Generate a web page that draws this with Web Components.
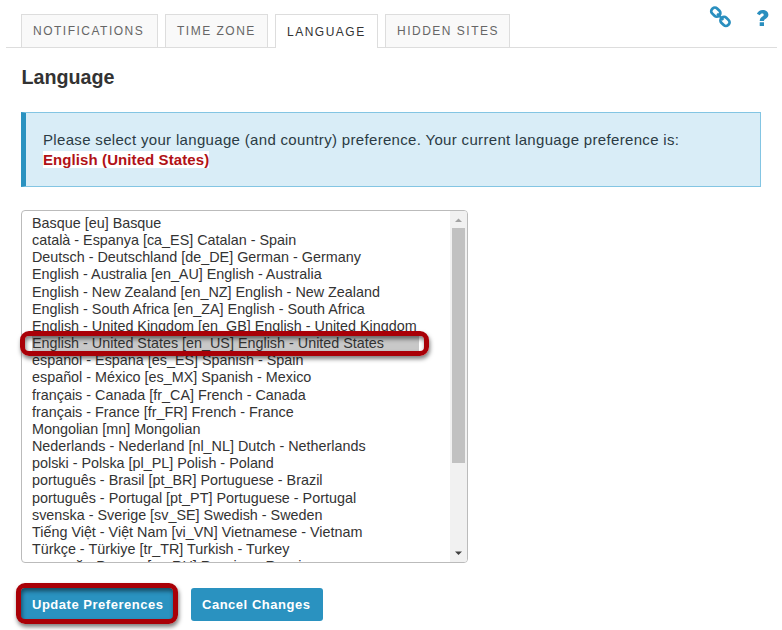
<!DOCTYPE html>
<html lang="en">
<head>
<meta charset="utf-8">
<title>Preferences - Language</title>
<style>
html,body{margin:0;background:#fff;width:782px;height:630px;overflow:hidden}
body{font-family:"Liberation Sans",Arial,sans-serif;color:#333}
</style>
</head>
<body>
<prefs-page></prefs-page>
<script>
const define = (name, html, setup) => customElements.define(name, class extends HTMLElement {
  connectedCallback() {
    if (this.shadowRoot) return;
    const root = this.attachShadow({mode: 'open'});
    root.innerHTML = html;
    if (setup) setup(root, this);
  }
});

define('prefs-tab', `<style>
:host{display:block;box-sizing:border-box;height:33px;border:1px solid #ddd;border-bottom:0;background:#f9f9f9;
 padding:0 0 0 11px;font-size:12px;line-height:32px;letter-spacing:1.5px;color:#666;white-space:nowrap}
:host([active]){height:34px;background:#fff;color:#333;line-height:34px;margin-bottom:-1px}
</style><slot></slot>`);

define('prefs-tabs', `<style>
:host{display:flex;box-sizing:border-box;height:48px;margin-left:6px;width:771px;padding:14px 0 0 15px;gap:7px;border-bottom:1px solid #ddd}
.icons{position:absolute;left:709px;top:6px;display:flex;gap:0}
svg{display:block}
</style><slot></slot>
<div class="icons">
<svg width="23" height="23" viewBox="0 0 23 23" fill="none" stroke="#2a8fbf" stroke-width="2.7">
<rect x="2" y="2.6" width="9.6" height="7" rx="3.1" transform="rotate(45 6.8 6.1)"/>
<rect x="11.2" y="11.9" width="9.6" height="7" rx="3.1" transform="rotate(45 16 15.4)"/>
<path stroke-width="2.4" d="M8.2 7.6l6.2 6.2"/></svg>
<svg width="40" height="23" viewBox="0 0 40 23"><path fill="#2a8fbf" d="M24.9 7.8C26 5.4 27.9 4 30.7 4c3.2 0 5.7 1.9 5.7 4.7 0 3.7-4.4 3.9-4.4 6.3h-4.3c0-4.3 4-4.3 4-6.1 0-.8-.6-1.3-1.5-1.3-1 0-1.7.6-2.4 1.7zM27.7 16.2H32V20h-4.3z"/></svg>
</div>`);

define('info-banner', `<style>
:host{display:block;box-sizing:border-box;width:740px;height:75px;border:1px solid #83c5e3;border-left:5px solid #2a92c0;background:#d9edf7;
 padding:17px 0 0 17px;font-size:15px;line-height:20px;letter-spacing:.325px;color:#2b3b44;white-space:nowrap}
</style><slot></slot>`);

define('current-value', `<style>
:host{display:table;background:#fff;color:#b11116;font-weight:bold;font-size:15px;line-height:17px;letter-spacing:.09px;margin-top:1px}
</style><slot></slot>`);

define('mark-frame', `<style>
:host{position:absolute;box-sizing:border-box;border:5px solid #a90007;border-radius:9px;
 box-shadow:1px 3px 4px rgba(0,0,0,.5),inset 1px 3px 4px rgba(0,0,0,.5)}
</style>`);

define('list-option', `<style>
:host{display:block;padding-left:10px;margin-right:31px;height:17.16px;line-height:17.16px;white-space:nowrap}
:host([selected]) {margin-left:10px;padding-left:0;background:#c8c8c8}
</style><slot></slot>`);

define('list-scrollbar', `<style>
:host{display:flex;flex-direction:column;align-items:center;width:17px;background:#f1f1f1}
i{width:13px;height:235px;background:#c1c1c1}
.g{flex:1}
svg{width:17px;height:17px}
</style><svg viewBox="0 0 17 17"><path fill="#a3a3a3" d="M5 11h7L8.5 7.5z"/></svg><i></i><div class="g"></div><svg viewBox="0 0 17 17"><path fill="#404040" d="M5 6.5h7L8.5 10z"/></svg>`);

define('language-list', `<style>
:host{display:flex;box-sizing:border-box;width:447px;height:353px;border:1px solid #bbb;border-radius:4px;overflow:hidden;font-size:14.37px;color:#333}
.rows{flex:1;padding-top:4px;overflow:hidden;box-sizing:border-box}
</style><div class="rows"></div><list-scrollbar></list-scrollbar>`, root => {
  const rows = root.querySelector('.rows');
  for (const text of [
    'Basque [eu] Basque','català - Espanya [ca_ES] Catalan - Spain','Deutsch - Deutschland [de_DE] German - Germany',
    'English - Australia [en_AU] English - Australia','English - New Zealand [en_NZ] English - New Zealand',
    'English - South Africa [en_ZA] English - South Africa','English - United Kingdom [en_GB] English - United Kingdom',
    'English - United States [en_US] English - United States','español - España [es_ES] Spanish - Spain',
    'español - México [es_MX] Spanish - Mexico','français - Canada [fr_CA] French - Canada','français - France [fr_FR] French - France',
    'Mongolian [mn] Mongolian','Nederlands - Nederland [nl_NL] Dutch - Netherlands','polski - Polska [pl_PL] Polish - Poland',
    'português - Brasil [pt_BR] Portuguese - Brazil','português - Portugal [pt_PT] Portuguese - Portugal',
    'svenska - Sverige [sv_SE] Swedish - Sweden','Tiếng Việt - Việt Nam [vi_VN] Vietnamese - Vietnam',
    'Türkçe - Türkiye [tr_TR] Turkish - Turkey','русский - Россия [ru_RU] Russian - Russia']) {
    const o = document.createElement('list-option');
    o.textContent = text;
    if (text.includes('en_US')) o.setAttribute('selected', '');
    rows.append(o);
  }
});

define('action-button', `<style>
:host{display:block;box-sizing:border-box;height:33px;border-radius:3px;background:#2a92c0;color:#fff;
 padding-left:11px;font-weight:bold;font-size:13px;line-height:33px;letter-spacing:.52px;white-space:nowrap}
</style><slot></slot>`);

define('prefs-page', `<style>
:host{display:block;position:relative;width:782px;height:630px}
h1{margin:16px 0 0 21.5px;font-size:19.7px;line-height:26px;color:#333}
info-banner{margin:22px 0 0 21px}
language-list{margin:23px 0 0 21px}
.buttons{display:flex;gap:18px;margin:25px 0 0 21px}
</style>
<prefs-tabs>
<prefs-tab style="width:137px">NOTIFICATIONS</prefs-tab><prefs-tab style="width:103px">TIME ZONE</prefs-tab><prefs-tab active style="width:103px">LANGUAGE</prefs-tab><prefs-tab style="width:125px">HIDDEN SITES</prefs-tab>
</prefs-tabs>
<h1>Language</h1>
<info-banner>Please select your language (and country) preference. Your current language preference is:<current-value>English (United States)</current-value></info-banner>
<language-list></language-list>
<div class="buttons"><action-button style="width:152px">Update Preferences</action-button><action-button style="width:132px">Cancel Changes</action-button></div>
<mark-frame style="left:20px;top:331px;width:409px;height:25px"></mark-frame>
<mark-frame style="left:16px;top:583px;width:162px;height:41px"></mark-frame>`);
</script>
</body>
</html>
